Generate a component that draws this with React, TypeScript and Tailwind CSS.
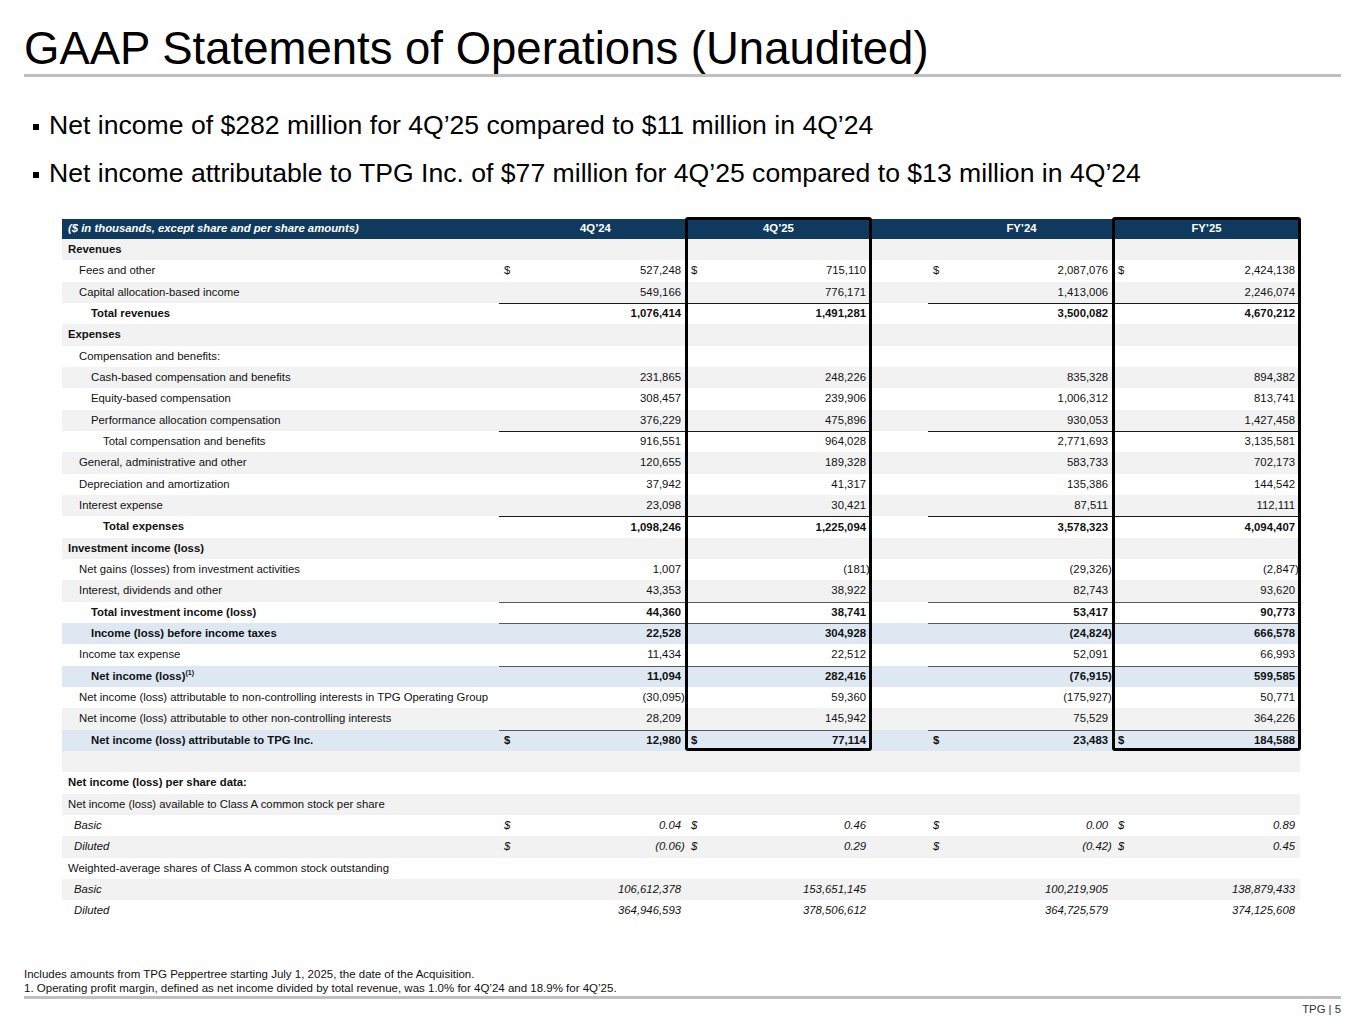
type Bg = "g" | "w" | "b";
type Row = {
  label: string;
  ind: 6 | 12 | 17 | 29 | 41;
  bold?: boolean;
  italic?: boolean;
  bg: Bg;
  vals?: string[];
  dollar?: boolean;
  line?: "dark" | "soft";
  sup?: string;
};

const rows: Row[] = [
  { label: "Revenues", ind: 6, bold: true, bg: "g" },
  { label: "Fees and other", ind: 17, bg: "w", vals: ["527,248", "715,110", "2,087,076", "2,424,138"], dollar: true },
  { label: "Capital allocation-based income", ind: 17, bg: "g", vals: ["549,166", "776,171", "1,413,006", "2,246,074"] },
  { label: "Total revenues", ind: 29, bold: true, bg: "w", vals: ["1,076,414", "1,491,281", "3,500,082", "4,670,212"], line: "dark" },
  { label: "Expenses", ind: 6, bold: true, bg: "g" },
  { label: "Compensation and benefits:", ind: 17, bg: "w" },
  { label: "Cash-based compensation and benefits", ind: 29, bg: "g", vals: ["231,865", "248,226", "835,328", "894,382"] },
  { label: "Equity-based compensation", ind: 29, bg: "w", vals: ["308,457", "239,906", "1,006,312", "813,741"] },
  { label: "Performance allocation compensation", ind: 29, bg: "g", vals: ["376,229", "475,896", "930,053", "1,427,458"] },
  { label: "Total compensation and benefits", ind: 41, bg: "w", vals: ["916,551", "964,028", "2,771,693", "3,135,581"], line: "dark" },
  { label: "General, administrative and other", ind: 17, bg: "g", vals: ["120,655", "189,328", "583,733", "702,173"] },
  { label: "Depreciation and amortization", ind: 17, bg: "w", vals: ["37,942", "41,317", "135,386", "144,542"] },
  { label: "Interest expense", ind: 17, bg: "g", vals: ["23,098", "30,421", "87,511", "112,111"] },
  { label: "Total expenses", ind: 41, bold: true, bg: "w", vals: ["1,098,246", "1,225,094", "3,578,323", "4,094,407"], line: "dark" },
  { label: "Investment income (loss)", ind: 6, bold: true, bg: "g" },
  { label: "Net gains (losses) from investment activities", ind: 17, bg: "w", vals: ["1,007", "(181)", "(29,326)", "(2,847)"] },
  { label: "Interest, dividends and other", ind: 17, bg: "g", vals: ["43,353", "38,922", "82,743", "93,620"] },
  { label: "Total investment income (loss)", ind: 29, bold: true, bg: "w", vals: ["44,360", "38,741", "53,417", "90,773"], line: "soft" },
  { label: "Income (loss) before income taxes", ind: 29, bold: true, bg: "b", vals: ["22,528", "304,928", "(24,824)", "666,578"], line: "soft" },
  { label: "Income tax expense", ind: 17, bg: "w", vals: ["11,434", "22,512", "52,091", "66,993"] },
  { label: "Net income (loss)", sup: "(1)", ind: 29, bold: true, bg: "b", vals: ["11,094", "282,416", "(76,915)", "599,585"], line: "soft" },
  { label: "Net income (loss) attributable to non-controlling interests in TPG Operating Group", ind: 17, bg: "w", vals: ["(30,095)", "59,360", "(175,927)", "50,771"] },
  { label: "Net income (loss) attributable to other non-controlling interests", ind: 17, bg: "g", vals: ["28,209", "145,942", "75,529", "364,226"] },
  { label: "Net income (loss) attributable to TPG Inc.", ind: 29, bold: true, bg: "b", vals: ["12,980", "77,114", "23,483", "184,588"], dollar: true, line: "soft" },
  { label: "", ind: 6, bg: "g" },
  { label: "Net income (loss) per share data:", ind: 6, bold: true, bg: "w" },
  { label: "Net income (loss) available to Class A common stock per share", ind: 6, bg: "g" },
  { label: "Basic", ind: 12, italic: true, bg: "w", vals: ["0.04", "0.46", "0.00", "0.89"], dollar: true },
  { label: "Diluted", ind: 12, italic: true, bg: "g", vals: ["(0.06)", "0.29", "(0.42)", "0.45"], dollar: true },
  { label: "Weighted-average shares of Class A common stock outstanding", ind: 6, bg: "w" },
  { label: "Basic", ind: 12, italic: true, bg: "g", vals: ["106,612,378", "153,651,145", "100,219,905", "138,879,433"] },
  { label: "Diluted", ind: 12, italic: true, bg: "w", vals: ["364,946,593", "378,506,612", "364,725,579", "374,125,608"] },
];

const bgClass: Record<Bg, string> = { g: "bg-[#f2f2f2]", w: "bg-white", b: "bg-[#dde8f3]" };
const indClass = { 6: "pl-[6px]", 12: "pl-[12px]", 17: "pl-[17px]", 29: "pl-[29px]", 41: "pl-[41px]" };
const colW = ["w-[187px]", "w-[185px]", "w-[185px]", "w-[187px]"];

function ValueCell({ v, dollar, line, w }: { v?: string; dollar?: boolean; line?: Row["line"]; w: string }) {
  const neg = !!v && v.startsWith("(");
  const text = neg ? v!.slice(0, -1) : v;
  const border = line === "dark" ? "border-t border-[#1a1a1a]" : line === "soft" ? "border-t border-[#5a5a5a]" : "";
  return (
    <div className={`flex h-full shrink-0 items-center justify-between pl-[5px] pr-[1px] ${w} ${border}`}>
      <span>{v && dollar ? "$" : ""}</span>
      {v && (
        <span className="flex">
          <span>{text}</span>
          <span className="inline-block w-[4px]">{neg ? ")" : ""}</span>
        </span>
      )}
    </div>
  );
}

function TableRow({ row }: { row: Row }) {
  const font = `${row.bold ? "font-bold" : ""} ${row.italic ? "italic" : ""}`;
  return (
    <div className={`flex h-[21.33px] items-stretch ${bgClass[row.bg]} ${font}`}>
      <div className={`flex w-[437px] shrink-0 items-center whitespace-nowrap ${indClass[row.ind]}`}>
        {row.label}
        {row.sup && <sup className="text-[7px] font-bold">{row.sup}</sup>}
      </div>
      <ValueCell v={row.vals?.[0]} dollar={row.dollar} line={row.line} w={colW[0]} />
      <ValueCell v={row.vals?.[1]} dollar={row.dollar} line={row.line} w={colW[1]} />
      <div className="w-[57px] shrink-0" />
      <ValueCell v={row.vals?.[2]} dollar={row.dollar} line={row.line} w={colW[2]} />
      <ValueCell v={row.vals?.[3]} dollar={row.dollar} line={row.line} w={colW[3]} />
    </div>
  );
}

export default function App() {
  return (
    <div className="h-[1024px] w-[1365px] overflow-hidden bg-white font-['Liberation_Sans',Arial,sans-serif] text-[#111]">
      <div className="px-[24px] pt-[26px]">
        <h1 className="whitespace-nowrap text-[45.5px] leading-[45px] text-black">GAAP Statements of Operations (Unaudited)</h1>
        <div className="mt-[3px] h-[3px] bg-[#c0c0c0]" />
      </div>

      <div className="mt-[35px] flex flex-col gap-[21px] pl-[33px] text-[26.6px] leading-[27px] text-black">
        <div className="flex items-center whitespace-nowrap">
          <span className="mr-[10px] mt-[2px] inline-block h-[6px] w-[6px] bg-black" />
          Net income of $282 million for 4Q’25 compared to $11 million in 4Q’24
        </div>
        <div className="flex items-center whitespace-nowrap">
          <span className="mr-[10px] mt-[2px] inline-block h-[6px] w-[6px] bg-black" />
          Net income attributable to TPG Inc. of $77 million for 4Q’25 compared to $13 million in 4Q’24
        </div>
      </div>

      <div className="relative ml-[62px] mt-[32px] w-[1238px] text-[11.33px] leading-none">
        <div className="flex h-[20px] items-stretch bg-[#0f3a5d] font-bold text-white">
          <div className="flex w-[437px] shrink-0 items-center pl-[6px] italic">($ in thousands, except share and per share amounts)</div>
          <div className="flex w-[187px] shrink-0 items-center justify-center pl-[6px]">4Q’24</div>
          <div className="flex w-[185px] shrink-0 items-center justify-center">4Q’25</div>
          <div className="w-[57px] shrink-0" />
          <div className="flex w-[185px] shrink-0 items-center justify-center pl-[2px]">FY’24</div>
          <div className="flex w-[187px] shrink-0 items-center justify-center">FY’25</div>
        </div>
        {rows.map((r, i) => (
          <TableRow key={i} row={r} />
        ))}

        <div className="pointer-events-none absolute left-[623px] top-[-2px] h-[534px] w-[187px] rounded-[3px] border-[3px] border-black" />
        <div className="pointer-events-none absolute left-[1050px] top-[-2px] h-[534px] w-[189px] rounded-[3px] border-[3px] border-black" />
      </div>

      <div className="mt-[45px] px-[24px] text-[11.5px] leading-[14px] text-[#111]">
        <p className="whitespace-nowrap">Includes amounts from TPG Peppertree starting July 1, 2025, the date of the Acquisition.</p>
        <p className="whitespace-nowrap">1. Operating profit margin, defined as net income divided by total revenue, was 1.0% for 4Q’24 and 18.9% for 4Q’25.</p>
        <div className="mt-[1px] h-[3px] bg-[#c0c0c0]" />
        <div className="mt-[3px] text-right text-[11.33px] leading-[14px] text-[#333]">TPG | 5</div>
      </div>
    </div>
  );
}
